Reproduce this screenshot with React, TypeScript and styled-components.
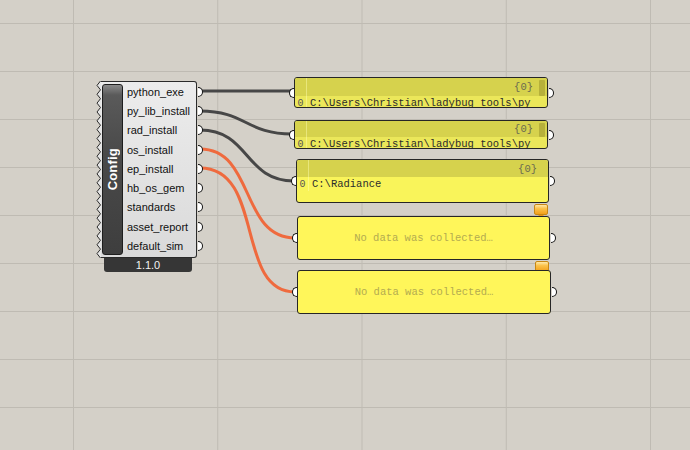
import React from "react";
import styled, { createGlobalStyle, css } from "styled-components";

const GlobalStyle = createGlobalStyle`
  html, body { margin: 0; padding: 0; background: #d4d0c8; }
  #root { width: 690px; height: 450px; }
`;

const Canvas = styled.div`
  position: relative;
  z-index: 0;
  width: 690px;
  height: 450px;
  overflow: hidden;
  background-color: #d4d0c8;
  background-image: linear-gradient(to right, #bfbbb3 1px, transparent 1px),
    linear-gradient(to bottom, #bfbbb3 1px, transparent 1px);
  background-size: 144.25px 48px;
  background-position: 73px 23px;
`;

const Wires = styled.svg`
  position: absolute;
  left: 0;
  top: 0;
  pointer-events: none;
`;

// nodes sit at their place on the free canvas
const Node = styled.div<{ $x: number; $y: number }>`
  position: absolute;
  left: ${(p) => p.$x}px;
  top: ${(p) => p.$y}px;
`;

/* ---------- Config component ---------- */

const ConfigBody = styled.div`
  display: flex;
  height: 177px;
`;

const Zigzag = styled.svg`
  display: block;
  flex: none;
`;

const ConfigInner = styled.div`
  display: flex;
  width: 96px;
  background: linear-gradient(to bottom, #ececec, #dadada);
  border: 1px solid #2a2a2a;
  border-left: none;
  border-radius: 0 3px 3px 0;
  box-sizing: border-box;
`;

const NameBar = styled.div`
  flex: none;
  width: 21px;
  margin: 2px 0 2px 1px;
  border: 1px solid #1e1e1e;
  border-radius: 3px;
  box-sizing: border-box;
  background: linear-gradient(to bottom, #8a8a8a 0px, #5a5a5a 10px, #4a4a4a 40%, #3e3e3e 100%);
  display: flex;
  align-items: center;
  justify-content: center;
`;

const NameText = styled.span`
  writing-mode: vertical-rl;
  transform: rotate(180deg);
  color: #fff;
  font-family: "Liberation Sans", Arial, sans-serif;
  font-weight: bold;
  font-size: 13px;
  letter-spacing: 0.2px;
`;

const OutputList = styled.div`
  display: flex;
  flex-direction: column;
  margin-left: 4px;
  flex: 1;
`;

const OutputRow = styled.div`
  position: relative;
  height: 19.3px;
  display: flex;
  align-items: center;
  font-family: "Liberation Sans", Arial, sans-serif;
  font-size: 11px;
  color: #111;
`;

const Grip = styled.span<{ $side: "left" | "right" }>`
  position: absolute;
  top: 50%;
  width: 4px;
  height: 8px;
  margin-top: -5px;
  background: #fff;
  border: 1.5px solid #111;
  ${(p) =>
    p.$side === "right"
      ? css`
          right: -6.5px;
          border-left: none;
          border-radius: 0 5px 5px 0;
        `
      : css`
          left: -6.5px;
          border-right: none;
          border-radius: 5px 0 0 5px;
        `}
`;

const VersionTab = styled.div`
  margin-left: 8px;
  width: 88px;
  height: 14px;
  background: #363636;
  border-radius: 0 0 3px 3px;
  color: #f2f2f2;
  font-family: "Liberation Sans", Arial, sans-serif;
  font-size: 11px;
  line-height: 14px;
  text-align: center;
`;

/* ---------- Panels ---------- */

type Tone = "dim" | "mid" | "bright";

const bodyColor: Record<Tone, string> = {
  dim: "#ebe75a",
  mid: "#f9f45a",
  bright: "#fff65a",
};

const PanelBox = styled.div<{ $w: number; $h: number; $tone: Tone }>`
  position: relative;
  width: ${(p) => p.$w}px;
  height: ${(p) => p.$h}px;
  box-sizing: border-box;
  border: 1px solid #262626;
  border-radius: 3px;
  background: ${(p) => bodyColor[p.$tone]};
  display: flex;
  flex-direction: column;
  font-family: "Liberation Mono", "Courier New", monospace;
  font-size: 10.5px;
`;

const PanelClip = styled.div`
  flex: 1;
  overflow: hidden;
  border-radius: 2px;
  display: flex;
  flex-direction: column;
`;

const Header = styled.div<{ $h: number }>`
  flex: none;
  height: ${(p) => p.$h}px;
  background: #d6d24d;
  display: flex;
  align-items: center;
`;

const IndexCell = styled.div`
  flex: none;
  width: 11px;
  align-self: stretch;
  border-right: 1px solid rgba(255, 255, 180, 0.45);
  color: #555;
  display: flex;
  align-items: center;
  justify-content: center;
  font-size: 10px;
`;

const Count = styled.span`
  margin-left: auto;
  color: #6a6a50;
  margin-right: 11px;
`;

const ScrollThumb = styled.div`
  flex: none;
  width: 6px;
  align-self: stretch;
  margin: 2px 2px 0 -5px;
  background: #b6b03a;
  border-radius: 1px;
`;

const DataRow = styled.div`
  flex: none;
  height: 14px;
  display: flex;
  align-items: center;
  color: #2c2c2c;
`;

const RowText = styled.span`
  padding-left: 3px;
  white-space: pre;
`;

const EmptyText = styled.div`
  flex: 1;
  display: flex;
  align-items: center;
  justify-content: center;
  color: #b3ab50;
`;

const Balloon = styled.div`
  position: absolute;
  right: 0px;
  bottom: -13px;
  width: 14px;
  height: 11px;
  box-sizing: border-box;
  border: 1px solid #c88814;
  border-radius: 2px;
  background: linear-gradient(to bottom, #ffe9a8 0%, #fbc24a 40%, #f2a11c 100%);
  &::after {
    content: "";
    position: absolute;
    left: 3px;
    bottom: -4px;
    border-left: 3px solid transparent;
    border-right: 3px solid transparent;
    border-top: 3px solid #e5941a;
  }
`;

type PanelDef = {
  x: number;
  y: number;
  w: number;
  h: number;
  tone: Tone;
  header?: number;
  text?: string;
  scroll?: boolean;
  balloon?: boolean;
};

const panels: PanelDef[] = [
  { x: 294, y: 77, w: 254, h: 31, tone: "dim", header: 18, text: "C:\\Users\\Christian\\ladybug tools\\py", scroll: true },
  { x: 294, y: 120, w: 254, h: 29, tone: "dim", header: 16, text: "C:\\Users\\Christian\\ladybug tools\\py", scroll: true },
  { x: 296, y: 159, w: 253, h: 44, tone: "mid", header: 17, text: "C:\\Radiance", balloon: true },
  { x: 297, y: 216, w: 253, h: 44, tone: "bright", balloon: true },
  { x: 297, y: 270, w: 254, h: 44, tone: "bright" },
];

const Panel: React.FC<PanelDef> = ({ x, y, w, h, tone, header, text, scroll, balloon }) => (
  <Node $x={x} $y={y}>
    <PanelBox $w={w} $h={h} $tone={tone}>
      <PanelClip>
        {text ? (
          <>
            <Header $h={header ?? 18}>
              <IndexCell />
              <Count>{"{0}"}</Count>
              {scroll && <ScrollThumb />}
            </Header>
            <DataRow>
              <IndexCell>0</IndexCell>
              <RowText>{text}</RowText>
            </DataRow>
          </>
        ) : (
          <EmptyText>No data was collected…</EmptyText>
        )}
      </PanelClip>
      <Grip $side="left" />
      <Grip $side="right" />
      {balloon && <Balloon />}
    </PanelBox>
  </Node>
);

const outputs = [
  "python_exe",
  "py_lib_install",
  "rad_install",
  "os_install",
  "ep_install",
  "hb_os_gem",
  "standards",
  "asset_report",
  "default_sim",
];

const zigzagPoints = (() => {
  const pts: string[] = [];
  for (let i = 0; i <= 40; i++) {
    const y = (i * 177) / 40;
    pts.push(`${i % 2 === 0 ? 4.5 : 1} ${y.toFixed(2)}`);
  }
  return pts.join(" ");
})();

const ConfigComponent = () => (
  <Node $x={96} $y={81}>
    <ConfigBody>
      <Zigzag width="5" height="177" viewBox="0 0 5 177">
        <polygon points={`5 0 ${zigzagPoints} 5 177`} fill="#e6e6e6" />
        <polyline points={zigzagPoints} fill="none" stroke="#2a2a2a" strokeWidth="1" />
      </Zigzag>
      <ConfigInner>
        <NameBar>
          <NameText>Config</NameText>
        </NameBar>
        <OutputList>
          {outputs.map((o) => (
            <OutputRow key={o}>
              {o}
              <Grip $side="right" />
            </OutputRow>
          ))}
        </OutputList>
      </ConfigInner>
    </ConfigBody>
    <VersionTab>1.1.0</VersionTab>
  </Node>
);

const wires = [
  { d: "M200 91 L292 91", c: "#474747" },
  { d: "M200 111 C246 111 246 134 292 134", c: "#474747" },
  { d: "M200 130 C250 130 244 181 294 181", c: "#474747" },
  { d: "M200 149 C255 149 240 238 295 238", c: "#ef6a3e" },
  { d: "M200 168 C265 168 235 292 295 292", c: "#ef6a3e" },
];

export default function App() {
  return (
    <>
      <GlobalStyle />
      <Canvas>
        <Wires width="690" height="450">
          {wires.map((w, i) => (
            <path key={i} d={w.d} fill="none" stroke={w.c} strokeWidth="3" />
          ))}
        </Wires>
        <ConfigComponent />
        {panels.map((p, i) => (
          <Panel key={i} {...p} />
        ))}
      </Canvas>
    </>
  );
}
